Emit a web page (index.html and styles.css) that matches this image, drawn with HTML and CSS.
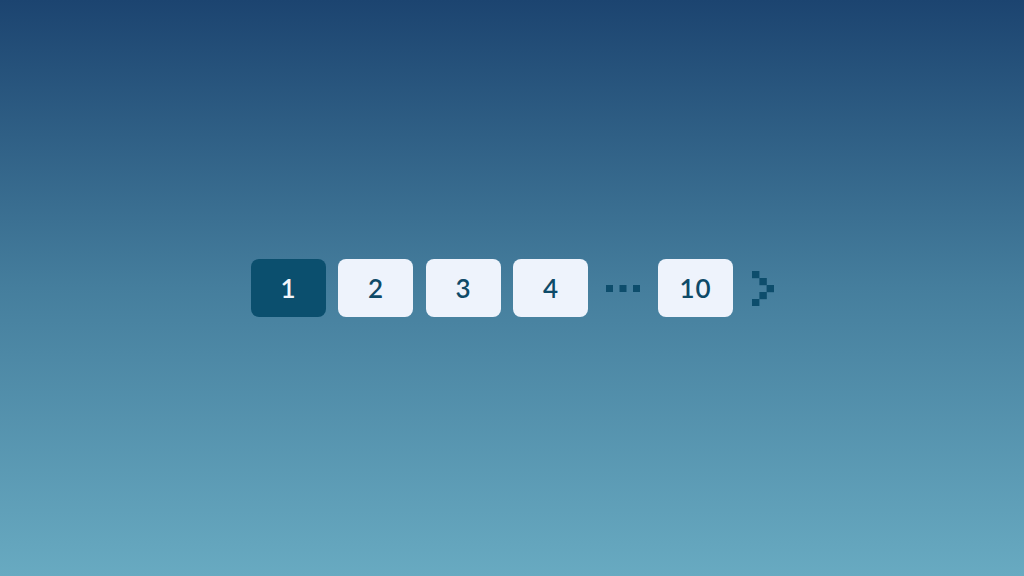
FILE: index.html
```html
<!DOCTYPE html>
<html lang="en">
<head>
<meta charset="utf-8">
<title>Pagination</title>
<link rel="stylesheet" href="styles.css">
</head>
<body>
<div class="stage">
  <nav class="pager">
    <a class="page active" href="#">1</a>
    <a class="page" href="#">2</a>
    <a class="page" href="#">3</a>
    <a class="page" href="#">4</a>
    <span class="dots">
      <svg width="34" height="7" viewBox="0 0 34 7"><rect x="0" y="0" width="7" height="7"/><rect x="13.5" y="0" width="7" height="7"/><rect x="27" y="0" width="7" height="7"/></svg>
    </span>
    <a class="page last" href="#">10</a>
    <a class="next" href="#">
      <svg width="22" height="35" viewBox="0 0 22 35"><rect x="0" y="0" width="7.4" height="7.2"/><rect x="7.4" y="7" width="7.4" height="7.2"/><rect x="14.6" y="14" width="7.4" height="7.2"/><rect x="7.4" y="21" width="7.4" height="7.2"/><rect x="0" y="28" width="7.4" height="7"/></svg>
    </a>
  </nav>
</div>
</body>
</html>
```

FILE: styles.css
```css
html, body {
	margin: 0;
	height: 100%;
}
body {
	font-family: Lato, "Open Sans", sans-serif;
	background: linear-gradient(to bottom, #1c4470 0%, #457e9d 50%, #68aac1 100%);
}
.stage {
	height: 100%;
	display: flex;
	align-items: center;
	justify-content: center;
}
.pager {
	display: flex;
	align-items: center;
	gap: 12.5px;
}
.page {
	box-sizing: border-box;
	width: 75px;
	height: 58px;
	padding-left: 1px;
	border-radius: 8px;
	background: #eef3fc;
	color: #0e4a68;
	font-size: 26px;
	font-weight: 600;
	letter-spacing: 1px;
	text-decoration: none;
	display: flex;
	align-items: center;
	justify-content: center;
}
.page.active {
	background: #0b4f6e;
	color: #f2f6fb;
}
.dots {
	display: flex;
	margin: 0 5.5px 0 5px;
}
.dots svg, .next svg {
	fill: #0d4d6c;
	display: block;
}
.next {
	margin-left: 6.5px;
	display: flex;
}
```
